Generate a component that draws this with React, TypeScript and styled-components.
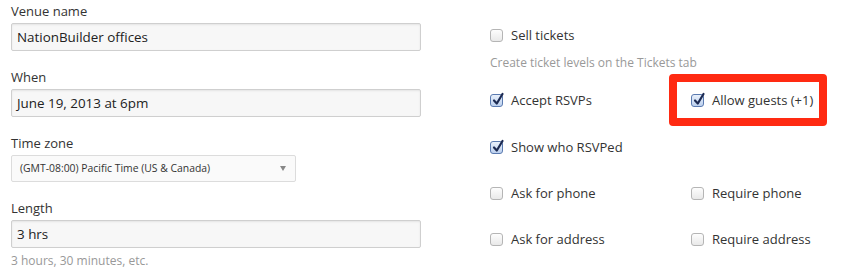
import React from "react";
import styled, { createGlobalStyle } from "styled-components";

const Global = createGlobalStyle`
  html, body { margin: 0; padding: 0; background: #fff; }
  body { font-family: "Open Sans", "Liberation Sans", sans-serif; color: #333; }
`;

const Page = styled.div`
  display: flex;
  width: 859px;
  height: 268px;
  padding: 1px 0 0 11px;
  box-sizing: border-box;
  overflow: hidden;
`;

const LeftCol = styled.div`
  width: 410px;
  display: flex;
  flex-direction: column;
`;

const Field = styled.div`
  display: flex;
  flex-direction: column;
  margin-bottom: 16px;
`;

const Label = styled.label`
  font-size: 13px;
  line-height: 20px;
  height: 20px;
  margin-bottom: 2px;
  color: #333;
`;

const TextInput = styled.div`
  box-sizing: border-box;
  height: 28px;
  width: 410px;
  border: 1px solid #cfcfcf;
  border-radius: 2px;
  background: #f7f7f7;
  box-shadow: inset 0 1px 2px rgba(0, 0, 0, 0.08);
  font-size: 13.4px;
  line-height: 26px;
  padding: 0 5px;
  color: #222;
`;

const Select = styled.div`
  box-sizing: border-box;
  height: 27px;
  width: 285px;
  border: 1px solid #dcdcdc;
  border-radius: 2px;
  background: #fafafa;
  font-size: 10.4px;
  line-height: 25px;
  padding: 0 8px;
  color: #333;
  display: flex;
  align-items: center;
  justify-content: space-between;
`;

const Arrow = styled.span`
  width: 0;
  height: 0;
  border-left: 3.5px solid transparent;
  border-right: 3.5px solid transparent;
  border-top: 5px solid #888;
  margin-right: 1px;
`;

const Help = styled.div`
  font-size: 12px;
  line-height: 16px;
  color: #999;
  margin-top: 5px;
`;

const RightCol = styled.div`
  margin-left: 69px;
  padding-top: 24px;
  display: flex;
  flex-direction: column;
`;

const Row = styled.div<{ $mt?: number }>`
  display: flex;
  height: 20px;
  margin-top: ${(p) => p.$mt ?? 0}px;
`;

const Cell = styled.div`
  position: relative;
  width: 201px;
  display: flex;
  align-items: center;
`;

const Box = styled.span<{ $on?: boolean }>`
  box-sizing: border-box;
  width: 13px;
  height: 13px;
  border-radius: 3px;
  border: 1px solid ${(p) => (p.$on ? "#5a7ab0" : "#b5b5b5")};
  background: ${(p) =>
    p.$on
      ? "linear-gradient(#e8f0fb, #bcd0ee)"
      : "linear-gradient(#fdfdfd, #e9e9e9)"};
  margin-right: 8px;
  position: relative;
  flex: none;
`;

const Check = styled.svg`
  position: absolute;
  left: 1px;
  top: -3px;
`;

const CheckText = styled.span`
  font-size: 13px;
  line-height: 20px;
  color: #333;
  white-space: nowrap;
`;

const Note = styled.div`
  font-size: 12px;
  line-height: 16px;
  color: #999;
  margin-top: 10px;
`;

const Highlight = styled.div`
  position: absolute;
  left: -22px;
  top: -16px;
  width: 158px;
  height: 52px;
  box-sizing: border-box;
  border: 8px solid #ff2a12;
  border-radius: 4px;
  pointer-events: none;
`;

function CheckBox({ on, label, highlight }: { on?: boolean; label: string; highlight?: boolean }) {
  return (
    <Cell>
      <Box $on={on}>
        {on && (
          <Check width="13" height="14" viewBox="0 0 13 14">
            <path d="M2 8.5 L4.8 11.5 L10.5 2" fill="none" stroke="#1c2a52" strokeWidth="2.2" strokeLinecap="round" strokeLinejoin="round" />
          </Check>
        )}
      </Box>
      <CheckText>{label}</CheckText>
      {highlight && <Highlight />}
    </Cell>
  );
}

export default function App() {
  return (
    <>
      <Global />
      <Page>
        <LeftCol>
          <Field>
            <Label>Venue name</Label>
            <TextInput>NationBuilder offices</TextInput>
          </Field>
          <Field>
            <Label>When</Label>
            <TextInput>June 19, 2013 at 6pm</TextInput>
          </Field>
          <Field>
            <Label>Time zone</Label>
            <Select>
              <span>(GMT-08:00) Pacific Time (US &amp; Canada)</span>
              <Arrow />
            </Select>
          </Field>
          <Field>
            <Label>Length</Label>
            <TextInput>3 hrs</TextInput>
            <Help>3 hours, 30 minutes, etc.</Help>
          </Field>
        </LeftCol>
        <RightCol>
          <Row>
            <CheckBox label="Sell tickets" />
          </Row>
          <Note>Create ticket levels on the Tickets tab</Note>
          <Row $mt={19}>
            <CheckBox on label="Accept RSVPs" />
            <CheckBox on label="Allow guests (+1)" highlight />
          </Row>
          <Row $mt={27}>
            <CheckBox on label="Show who RSVPed" />
          </Row>
          <Row $mt={26}>
            <CheckBox label="Ask for phone" />
            <CheckBox label="Require phone" />
          </Row>
          <Row $mt={26}>
            <CheckBox label="Ask for address" />
            <CheckBox label="Require address" />
          </Row>
        </RightCol>
      </Page>
    </>
  );
}
